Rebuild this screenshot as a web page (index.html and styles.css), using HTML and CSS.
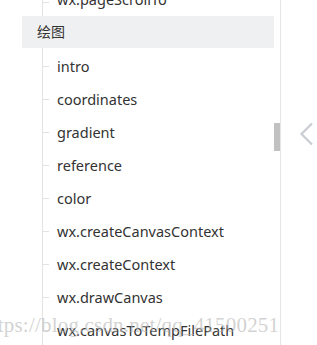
FILE: index.html
```html
<!DOCTYPE html>
<html>
<head>
<meta charset="utf-8">
<link rel="stylesheet" href="styles.css">
</head>
<body>
<div class="page">
  <div class="sidebar">
    <ul class="tree top">
      <li class="item">wx.pageScrollTo</li>
    </ul>
    <div class="group">绘图</div>
    <ul class="tree main">
      <li class="item">intro</li>
      <li class="item">coordinates</li>
      <li class="item">gradient</li>
      <li class="item">reference</li>
      <li class="item">color</li>
      <li class="item">wx.createCanvasContext</li>
      <li class="item">wx.createContext</li>
      <li class="item">wx.drawCanvas</li>
      <li class="item">wx.canvasToTempFilePath</li>
    </ul>
    <div class="thumb"></div>
  </div>
  <div class="side">
    <svg class="chev" width="16" height="24" viewBox="0 0 16 24"><path d="M13 1.5 L2.5 12 L13 22.5" fill="none" stroke="#c9ccd3" stroke-width="2.2"/></svg>
  </div>
</div>
<div class="watermark">https://blog.csdn.net/qq_41500251</div>
</body>
</html>
```
FILE: styles.css
```css
html, body { margin: 0; padding: 0; background: #fff; overflow: hidden; }
body { width: 317px; height: 345px; position: relative; font-family: "Noto Sans", "Noto Sans CJK SC", sans-serif; }
.page { display: flex; height: 345px; }
.sidebar { position: relative; width: 281px; border-right: 1px solid #e6e6e6; padding-left: 22px; box-sizing: border-box; margin-top: -15px; }
.tree { list-style: none; margin: 0; padding: 0 0 0 20px; position: relative; }
.tree.main { padding-top: 2px; }
.tree::before { content: ""; position: absolute; left: 20px; top: 0; bottom: 0; width: 1px; background: #e3e3e3; }
.item { position: relative; height: 33px; line-height: 33px; padding-left: 15px; font-size: 14.5px; color: #333; white-space: nowrap; }
.item::before { content: ""; position: absolute; left: 0; top: 16px; width: 7px; height: 1px; background: #e3e3e3; }
.top .item { height: 31px; line-height: 28px; }
.top .item::before { top: 17px; }
.group { height: 32px; line-height: 32px; background: #eff0f2; padding-left: 15px; font-size: 14px; color: #333; margin-right: 6px; }
.thumb { position: absolute; right: 0; top: 138px; width: 6px; height: 28px; background: #c1c1c1; }
.side { flex: 1; display: flex; justify-content: flex-end; padding-top: 122px; padding-right: 2px; }
.chev { display: block; }
.watermark { position: absolute; left: -19px; top: 313px; font-family: "Liberation Serif", serif; font-size: 21px; color: rgba(180,180,180,0.6); white-space: nowrap; letter-spacing: 0.2px; }
```
